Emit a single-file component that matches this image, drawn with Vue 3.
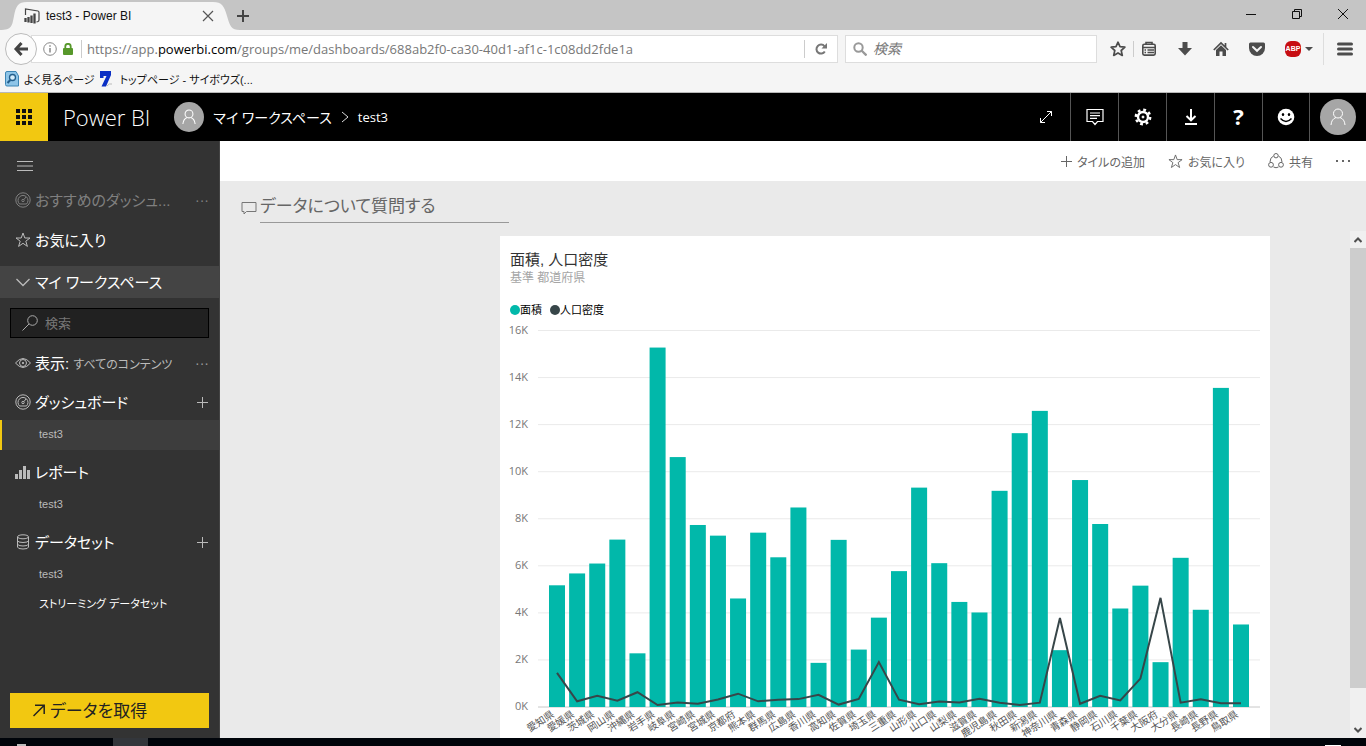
<script setup>
import { ref } from 'vue'

const prefectures = [
  ['愛知県', 5172, 1447], ['愛媛県', 5676, 244], ['茨城県', 6097, 478], ['岡山県', 7114, 270],
  ['沖縄県', 2281, 628], ['岩手県', 15275, 84], ['岐阜県', 10621, 191], ['宮崎県', 7735, 143],
  ['宮城県', 7282, 320], ['京都府', 4612, 566], ['熊本県', 7409, 241], ['群馬県', 6362, 310],
  ['広島県', 8479, 335], ['香川県', 1876, 520], ['高知県', 7103, 103], ['佐賀県', 2440, 341],
  ['埼玉県', 3797, 1913], ['三重県', 5774, 314], ['山形県', 9323, 121], ['山口県', 6112, 230],
  ['山梨県', 4465, 187], ['滋賀県', 4017, 351], ['鹿児島県', 9187, 179], ['秋田県', 11637, 88],
  ['新潟県', 12584, 183], ['神奈川県', 2415, 3778], ['青森県', 9645, 136], ['静岡県', 7777, 476],
  ['石川県', 4186, 276], ['千葉県', 5157, 1207], ['大阪府', 1905, 4640], ['大分県', 6340, 184],
  ['長崎県', 4132, 333], ['長野県', 13561, 155], ['鳥取県', 3507, 163]
]

const baseline = 387
const topLine = 10.5
const scale = (baseline - topLine) / 16000
const first = 47
const step = 684 / 34

const bars = prefectures.map(([name, area, density], i) => ({
  name,
  x: first + i * step,
  top: baseline - area * scale,
  lineY: baseline - density * scale
}))
const linePoints = bars.map((b) => `${b.x},${b.lineY}`).join(' ')
const ticks = [0, 2, 4, 6, 8, 10, 12, 14, 16].map((k) => ({
  label: `${k}K`,
  y: baseline - k * 1000 * scale
}))

const address = ref('')
const search = ref('')
const filter = ref('')
const question = ref('')
</script>

<template>
  <div class="window">
    <header class="browser">
      <div class="titlebar">
        <div class="tab">
          <svg class="tab-shape" viewBox="0 0 240 30" width="240" height="30" aria-hidden="true">
            <path d="M0 30C12 30 12 26 14 16C16 6 18 2 27 2H213C222 2 224 6 227 16C230 26 231 30 240 30Z" fill="#f5f5f5" />
          </svg>
          <svg class="tab-icon" viewBox="0 0 16 16" width="16" height="16" fill="none" stroke="#444">
            <path d="M1.500 7V1L14 3q1 .2 1 1.500V12q0 1-1 1.500L12.500 14" stroke-width="1.200" />
            <path d="M1.500 10v4M4.500 9v5.500M7.500 7.500V15M10.500 5.500v10" stroke-width="2.300" />
          </svg>
          <span class="tab-title">test3 - Power BI</span>
          <button class="plain tab-close" aria-label="タブを閉じる">
            <svg viewBox="0 0 12 12" width="12" height="12" stroke="#555" stroke-width="1.200"><path d="M1 1l10 10M11 1L1 11" /></svg>
          </button>
        </div>
        <button class="plain new-tab" aria-label="新しいタブ">
          <svg viewBox="0 0 12 12" width="12" height="12" stroke="#444" stroke-width="2"><path d="M6 0v12M0 6h12" /></svg>
        </button>
        <div class="window-controls">
          <button class="plain" aria-label="最小化"><svg viewBox="0 0 12 12" width="12" height="12" stroke="#111"><path d="M1 6.500h10" /></svg></button>
          <button class="plain" aria-label="元に戻す"><svg viewBox="0 0 12 12" width="12" height="12" stroke="#111" fill="none"><path d="M1.500 3.500h7v7h-7zM3.500 3.500v-2h7v7h-2" /></svg></button>
          <button class="plain" aria-label="閉じる"><svg viewBox="0 0 12 12" width="12" height="12" stroke="#111"><path d="M1 1l10 10M11 1L1 11" /></svg></button>
        </div>
      </div>

      <div class="navbar">
        <button class="plain back" aria-label="戻る">
          <svg viewBox="0 0 16 16" width="16" height="16" stroke="#444" stroke-width="3" fill="none"><path d="M8.500 2L3 8l5.500 6M3 8h12" /></svg>
        </button>
        <div class="url">
          <svg viewBox="0 0 14 14" width="14" height="14" fill="none" stroke="#888"><circle cx="7" cy="7" r="6.300" /><path d="M7 6v4.500M7 3.300v1.500" stroke-width="1.500" /></svg>
          <svg class="lock" viewBox="0 0 10 12" width="10" height="12"><path d="M2.300 6V3.500a2.700 2.700 0 0 1 5.400 0V6" fill="none" stroke="#57982b" stroke-width="1.800" /><rect y="5" width="10" height="7" rx="1" fill="#57982b" /></svg>
          <label class="address">
            <span class="address-text">https://app.<b>powerbi.com</b>/groups/me/dashboards/688ab2f0-ca30-40d1-af1c-1c08dd2fde1a</span>
            <input v-model="address" aria-label="アドレス" />
          </label>
          <button class="plain reload" aria-label="再読み込み">
            <svg viewBox="0 0 12 12" width="12" height="12"><path d="M9.500 3.300A4.500 4.500 0 1 0 9.800 8.500" fill="none" stroke="#777" stroke-width="2" /><path d="M12 0v5.500H6.500z" fill="#777" /></svg>
          </button>
        </div>
        <label class="web-search">
          <svg viewBox="0 0 14 14" width="14" height="14" fill="none" stroke="#999"><circle cx="5.500" cy="5.500" r="4.200" stroke-width="2" /><path d="M8.500 8.500l5 5" stroke-width="2.300" /></svg>
          <input v-model="search" placeholder="検索" aria-label="ウェブ検索" />
        </label>
        <div class="tools">
          <button class="plain star" aria-label="ブックマーク"><svg viewBox="0 0 16 16" width="16" height="16" fill="none" stroke="#4c4c4c" stroke-width="1.700" stroke-linejoin="round"><path d="M8 1.200l2 4.500 4.900.5-3.700 3.300 1.100 4.900L8 11.900l-4.300 2.500 1.100-4.900L1.100 6.200 6 5.700z" /></svg></button>
          <button class="plain list" aria-label="ブックマーク一覧"><svg viewBox="0 0 16 16" width="16" height="16" fill="none" stroke="#4c4c4c" stroke-width="1.600"><rect x="1.800" y="3.300" width="12.400" height="10.800" rx="1.500" /><path d="M2 6.500h12M3.500 9h1.500M6.500 9h6.500M3.500 11.500h1.500M6.500 11.500h6.500M5 3V1.500h6V3" /></svg></button>
          <button class="plain" aria-label="ダウンロード"><svg viewBox="0 0 16 16" width="16" height="16" fill="#4c4c4c"><path d="M5.500 1h5v6H15l-7 7.500L1 7h4.500z" /></svg></button>
          <button class="plain" aria-label="ホーム"><svg viewBox="0 0 16 16" width="16" height="16"><path d="M.8 9L8 2l7.200 7M12.500 2v4" fill="none" stroke="#4c4c4c" stroke-width="1.700" /><path d="M3 9l5-4.800L13 9v6H9.500v-4.500h-3V15H3z" fill="#4c4c4c" /></svg></button>
          <button class="plain" aria-label="Pocket"><svg viewBox="0 0 16 16" width="16" height="16"><path d="M1.500 1.500h13q1.500 0 1.500 1.500v4a8 8 0 0 1-16 0V3q0-1.500 1.500-1.500z" fill="#4c4c4c" /><path d="M4 6l4 3.800L12 6" fill="none" stroke="#f5f5f5" stroke-width="2" stroke-linecap="round" /></svg></button>
          <button class="plain abp" aria-label="Adblock Plus">
            <span class="abp-sign">ABP</span>
            <svg viewBox="0 0 8 4" width="8" height="4"><path d="M0 0h8L4 4z" fill="#4c4c4c" /></svg>
          </button>
          <button class="plain menu" aria-label="メニュー"><svg viewBox="0 0 16 14" width="16" height="14" stroke="#4c4c4c" stroke-width="3" stroke-linecap="round"><path d="M1.500 2h13M1.500 7h13M1.500 12h13" /></svg></button>
        </div>
      </div>

      <nav class="bookmarks">
        <a href="#">
          <svg viewBox="0 0 14 16" width="14" height="16"><path d="M.5 2q0-1.500 1.500-1.500h9L13.500 5v10H2Q.5 15 .5 13.500z" fill="#8ec5e8" stroke="#3d86b5" /><circle cx="7.500" cy="6.500" r="3" fill="#d6eefb" stroke="#245f8c" stroke-width="1.300" /><path d="M5.300 9L2.500 12" stroke="#245f8c" stroke-width="2" /></svg>
          <span>よく見るページ</span>
        </a>
        <a href="#">
          <svg viewBox="0 0 14 16" width="14" height="16"><path d="M1 0h11v4L7 15.500H2.500L7.500 5H4.500v2H1z" fill="#0a2fc4" /><path d="M8 15q2-3 5-2" stroke="#bbb" fill="none" /></svg>
          <span class="site">トップページ - サイボウズ(...</span>
        </a>
      </nav>
    </header>

    <header class="topbar">
      <button class="plain waffle" aria-label="アプリ">
        <svg viewBox="0 0 16 16" width="16" height="16" fill="#111"><path d="M0 0h4v4H0zM6 0h4v4H6zM12 0h4v4h-4zM0 6h4v4H0zM6 6h4v4H6zM12 6h4v4h-4zM0 12h4v4H0zM6 12h4v4H6zM12 12h4v4h-4z" /></svg>
      </button>
      <a href="#" class="brand">Power BI</a>
      <span class="avatar small"><svg viewBox="0 0 16 18" width="14" height="16" fill="none" stroke="#fff" stroke-width="1.200"><circle cx="8" cy="5.500" r="4.500" /><path d="M1 17q.5-6 5-7.500M15 17q-.5-6-5-7.500" /></svg></span>
      <a href="#" class="crumb">マイ ワークスペース</a>
      <svg class="crumb-arrow" viewBox="0 0 8 12" width="8" height="12" fill="none" stroke="#ddd"><path d="M1 1l6 5-6 5" /></svg>
      <a href="#" class="crumb page">test3</a>
      <div class="top-actions">
        <button class="plain" aria-label="全画面"><svg viewBox="0 0 14 14" width="14" height="14" fill="none" stroke="#fff"><path d="M1.500 12.500l11-11M8 1.500h4.500V6M1.500 8v4.500H6" /></svg></button>
        <button class="plain" aria-label="コメント"><svg viewBox="0 0 18 18" width="18" height="18" fill="none" stroke="#fff" stroke-width="1.200"><path d="M1 1.500h16v12h-5.500L9 16.500l-2.500-3H1zM4 5h10M4 7.700h10M4 10.400h7" /></svg></button>
        <button class="plain" aria-label="設定"><svg viewBox="0 0 18 18" width="18" height="18" fill="none" stroke="#fff"><circle cx="9" cy="9" r="5" stroke-width="2.400" /><circle cx="9" cy="9" r="7.200" stroke-width="2.400" stroke-dasharray="2.830 2.825" /><circle cx="9" cy="9" r="1" fill="#fff" /></svg></button>
        <button class="plain" aria-label="ダウンロード"><svg viewBox="0 0 14 18" width="14" height="18" fill="none" stroke="#fff" stroke-width="2"><path d="M7 1v11M2.500 8L7 12.300 11.500 8M1 16h12" /></svg></button>
        <button class="plain help" aria-label="ヘルプ">?</button>
        <button class="plain smile" aria-label="フィードバック"><svg viewBox="0 0 18 18" width="18" height="18"><circle cx="9" cy="9" r="8.300" fill="#fff" /><ellipse cx="6" cy="6.500" rx="1.200" ry="1.500" /><ellipse cx="12" cy="6.500" rx="1.200" ry="1.500" /><path d="M3.500 10.500q5.500 6 11 0" fill="none" stroke="#000" stroke-width="1.500" /></svg></button>
        <button class="plain account" aria-label="アカウント"><span class="avatar"><svg viewBox="0 0 16 18" width="16" height="18" fill="none" stroke="#fff"><circle cx="8" cy="5.500" r="4.500" /><path d="M1 17q.5-6 5-7.500M15 17q-.5-6-5-7.500" /></svg></span></button>
      </div>
    </header>

    <div class="workspace">
      <nav class="sidebar">
        <button class="plain burger" aria-label="ナビゲーション"><svg viewBox="0 0 16 10" width="16" height="10" stroke="#bbb"><path d="M0 .5h16M0 5h16M0 9.500h16" /></svg></button>
        <a href="#" class="row muted">
          <svg viewBox="0 0 16 16" width="16" height="16" fill="none" stroke="currentColor"><circle cx="8" cy="8" r="7.200" /><path d="M4.500 12a5 5 0 1 1 7 0z" /><circle cx="8" cy="8.500" r="1.200" /><path d="M9 7.500l2-2.500" /></svg>
          <span>おすすめのダッシュ...</span><i class="more">···</i>
        </a>
        <a href="#" class="row">
          <svg viewBox="0 0 16 16" width="16" height="16" fill="none" stroke="#bbb"><path d="M8 1l1.800 5h5.200l-4.200 3.200 1.600 5.200L8 11.300l-4.400 3.100 1.600-5.200L1 6h5.200z" /></svg>
          <span>お気に入り</span>
        </a>
        <a href="#" class="row current">
          <svg viewBox="0 0 16 16" width="16" height="16" fill="none" stroke="#bbb" stroke-width="1.300"><path d="M1.500 5L8 11.500 14.500 5" /></svg>
          <span>マイ ワークスペース</span>
        </a>
        <label class="filter">
          <svg viewBox="0 0 16 16" width="16" height="16" fill="none" stroke="#aaa"><circle cx="10.500" cy="5.500" r="4.800" /><path d="M7 9L.5 15.500" /></svg>
          <input v-model="filter" placeholder="検索" aria-label="検索" />
        </label>
        <a href="#" class="row view">
          <svg viewBox="0 0 16 16" width="16" height="16" fill="none" stroke="#bbb"><path d="M.5 8Q8-1 15.500 8 8 17 .5 8z" /><circle cx="8" cy="8" r="3.500" /><circle cx="8" cy="8" r=".7" fill="#bbb" /></svg>
          <span>表示: <small>すべてのコンテンツ</small></span><i class="more">···</i>
        </a>
        <div class="row head">
          <svg viewBox="0 0 16 16" width="16" height="16" fill="none" stroke="#bbb"><circle cx="8" cy="8" r="7.200" /><path d="M4.500 12a5 5 0 1 1 7 0z" /><circle cx="8" cy="8.500" r="1.200" /><path d="M9 7.500l2-2.500" /></svg>
          <span>ダッシュボード</span>
          <button class="plain add" aria-label="ダッシュボードを追加"><svg viewBox="0 0 11 11" width="11" height="11" stroke="#bbb"><path d="M5.500 0v11M0 5.500h11" /></svg></button>
        </div>
        <a href="#" class="child selected">test3</a>
        <div class="row head">
          <svg viewBox="0 0 16 16" width="16" height="16" fill="#bbb"><path d="M0 10h3v5H0zM4 6h3v9H4zM8 2h3v13H8zM12 6h3v9h-3z" /></svg>
          <span>レポート</span>
        </div>
        <a href="#" class="child">test3</a>
        <div class="row head">
          <svg viewBox="0 0 16 16" width="16" height="16" fill="none" stroke="#bbb"><ellipse cx="8" cy="2.800" rx="5.500" ry="2" /><path d="M2.500 3v10q0 2 5.500 2t5.500-2V3M2.500 6.500q0 2 5.500 2t5.500-2M2.500 10q0 2 5.500 2t5.500-2" /></svg>
          <span>データセット</span>
          <button class="plain add" aria-label="データセットを追加"><svg viewBox="0 0 11 11" width="11" height="11" stroke="#bbb"><path d="M5.500 0v11M0 5.500h11" /></svg></button>
        </div>
        <a href="#" class="child">test3</a>
        <a href="#" class="child bright">ストリーミング データセット</a>
        <button class="get-data">
          <svg viewBox="0 0 12 13" width="12" height="13" fill="none" stroke="#222" stroke-width="1.500"><path d="M.5 12L11 1.500M2 1.200h9.200V10" /></svg>
          <span>データを取得</span>
        </button>
      </nav>

      <main class="content">
        <div class="actions">
          <button class="plain"><svg viewBox="0 0 11 11" width="11" height="11" stroke="#666"><path d="M5.500 0v11M0 5.500h11" /></svg><span>タイルの追加</span></button>
          <button class="plain"><svg viewBox="0 0 16 16" width="15" height="15" fill="none" stroke="#666"><path d="M8 1l1.800 5h5.200l-4.200 3.200 1.600 5.200L8 11.300l-4.400 3.100 1.600-5.200L1 6h5.200z" /></svg><span>お気に入り</span></button>
          <button class="plain"><svg viewBox="0 0 16 16" width="16" height="16" fill="none" stroke="#666"><path d="M5.500 3Q2 4.500 2 9M10.500 3Q14 4.500 14 9M5.500 14q2.500 1.500 5 0" /><circle cx="8" cy="2.700" r="2.200" /><circle cx="3" cy="11.800" r="2.400" /><circle cx="13" cy="11.800" r="2.400" /></svg><span>共有</span></button>
          <button class="plain dots" aria-label="その他"><svg viewBox="0 0 14 2" width="14" height="2" fill="#666"><path d="M0 0h2v2H0zM6 0h2v2H6zM12 0h2v2h-2z" /></svg></button>
        </div>

        <label class="question">
          <svg viewBox="0 0 16 14" width="16" height="14" fill="none" stroke="#777"><path d="M1 1.500h14v9H5.500L3 13v-2.500H1z" /></svg>
          <input v-model="question" placeholder="データについて質問する" aria-label="データについて質問する" />
        </label>

        <div class="scroll-area">
          <div class="canvas">
            <article class="tile">
              <h2>面積, 人口密度</h2>
              <p>基準 都道府県</p>
              <div class="legend">
                <span><i class="dot area"></i>面積</span>
                <span><i class="dot density"></i>人口密度</span>
              </div>
              <svg class="chart" viewBox="0 0 750 424" role="img" aria-label="都道府県別の面積と人口密度">
                <g v-for="t in ticks" :key="t.label">
                  <line x1="28" x2="750" :y1="t.y" :y2="t.y" :class="['grid', { axis: t.label === '0K' }]" />
                  <text x="18" :y="t.y + 3" class="tick">{{ t.label }}</text>
                </g>
                <rect v-for="b in bars" :key="b.name" :x="b.x - 8" :y="b.top" width="16" :height="baseline - b.top" class="bar" />
                <polyline :points="linePoints" class="line" />
                <text v-for="b in bars" :key="b.name" class="name" :transform="`translate(${b.x - 2} ${baseline + 9}) rotate(-33)`">{{ b.name }}</text>
              </svg>
            </article>
          </div>
          <div class="scrollbar" aria-hidden="true">
            <span class="arrow"><svg viewBox="0 0 8 6" width="8" height="6" fill="none" stroke="#505050" stroke-width="2"><path d="M.5 5L4 1.500 7.500 5" /></svg></span>
            <span class="thumb"></span>
            <span class="track"></span>
            <span class="arrow"><svg viewBox="0 0 8 6" width="8" height="6" fill="none" stroke="#505050" stroke-width="2"><path d="M.5 1L4 4.500 7.500 1" /></svg></span>
          </div>
        </div>
      </main>
    </div>

    <footer class="taskbar"><span class="start"></span><span class="app"></span><span class="tray"></span></footer>
  </div>
</template>

<style>
body {
  margin: 0;
}
</style>

<style scoped>
.window {
  display: flex;
  flex-direction: column;
  height: 100vh;
  overflow: hidden;
  font-family: "Liberation Sans", "Noto Sans CJK JP", sans-serif;
  font-feature-settings: "palt";
  font-size: 12px;
  color: #111;
}
.window * {
  box-sizing: border-box;
}
svg {
  flex: none;
  display: block;
}
a {
  color: inherit;
  text-decoration: none;
}
i {
  font-style: normal;
}
input {
  font: inherit;
  font-feature-settings: inherit;
  color: inherit;
  border: 0;
  background: none;
  padding: 0;
  min-width: 0;
  outline: none;
}
.plain {
  font: inherit;
  font-feature-settings: inherit;
  color: inherit;
  border: 0;
  background: none;
  padding: 0;
  display: flex;
  align-items: center;
  justify-content: center;
}

.browser {
  flex: none;
  background: #f5f5f5;
  border-bottom: 1px solid #b8b8b8;
}
.titlebar {
  display: flex;
  height: 30px;
  background: #c5c5c5;
}
.tab {
  position: relative;
  display: flex;
  align-items: center;
  width: 230px;
  padding: 2px 16px 0 24px;
}
.tab-shape {
  position: absolute;
  left: 0;
  top: 0;
}
.tab-icon,
.tab-title,
.tab-close {
  position: relative;
}
.tab-title {
  flex: 1;
  margin-left: 6px;
}
.new-tab {
  width: 26px;
  padding-top: 2px;
}
.window-controls {
  display: flex;
  margin-left: auto;
}
.window-controls .plain {
  width: 46px;
  height: 28px;
}
.navbar {
  display: flex;
  align-items: center;
  height: 36px;
  padding-top: 2px;
}
.back {
  position: relative;
  flex: none;
  width: 32px;
  height: 32px;
  margin-left: 5px;
  border: 1px solid #bbb;
  border-radius: 50%;
  background: #fbfbfb;
}
.url {
  flex: 1;
  display: flex;
  align-items: center;
  height: 28px;
  margin-left: -6px;
  padding-left: 11px;
  background: #fff;
  border: 1px solid #ddd;
  min-width: 0;
}
.lock {
  margin: 0 8px 0 6px;
}
.address {
  flex: 1;
  display: flex;
  min-width: 0;
  padding-left: 5px;
  border-left: 1px solid #ccc;
  font-family: "Open Sans", sans-serif;
  font-size: 13px;
  line-height: 18px;
  color: #777;
}
.address-text {
  white-space: nowrap;
  overflow: hidden;
}
.address b {
  font-weight: 400;
  color: #000;
}
.address input {
  flex: 1;
}
.reload {
  width: 33px;
  height: 18px;
  border-left: 1px solid #ccc;
}
.web-search {
  flex: 0 1 252px;
  display: flex;
  align-items: center;
  gap: 6px;
  height: 28px;
  margin-left: 7px;
  padding-left: 7px;
  background: #fff;
  border: 1px solid #ddd;
  min-width: 0;
}
.web-search input {
  flex: 1;
  font-size: 14px;
}
.web-search input::placeholder {
  color: #777;
  font-style: italic;
}
.tools {
  display: flex;
  align-items: center;
  margin-left: 5px;
}
.tools .plain {
  width: 36px;
  height: 16px;
}
.tools .star {
  width: 32px;
  border-right: 1px solid #ccc;
}
.tools .list {
  width: 33px;
  padding-right: 3px;
}
.tools .abp {
  width: 49px;
  height: 32px;
  gap: 4px;
  border-right: 1px solid #ddd;
}
.abp-sign {
  width: 16px;
  height: 16px;
  border-radius: 6px;
  background: #c70d12;
  color: #fff;
  font-size: 7px;
  line-height: 16px;
  font-weight: 700;
  text-align: center;
}
.tools .menu {
  width: 42px;
}
.bookmarks {
  display: flex;
  align-items: center;
  gap: 4px;
  height: 26px;
  padding-left: 5px;
  font-size: 11px;
}
.bookmarks a {
  display: flex;
  align-items: center;
  gap: 5px;
}
.bookmarks .site {
  margin-left: 2px;
}

.topbar {
  flex: none;
  display: flex;
  align-items: center;
  height: 48px;
  background: #000;
  color: #fff;
}
.waffle {
  width: 48px;
  height: 48px;
  background: #f2c811;
}
.brand {
  margin: 0 24px 0 15px;
  font: 300 22px "Open Sans", sans-serif;
}
.avatar {
  display: flex;
  align-items: center;
  justify-content: center;
  width: 36px;
  height: 36px;
  border-radius: 50%;
  background: #a6a6a6;
}
.avatar.small {
  width: 30px;
  height: 30px;
  margin-right: 9px;
}
.crumb {
  font-family: "Open Sans", "Noto Sans CJK JP", sans-serif;
  font-size: 14px;
}
.crumb.page {
  font-size: 13px;
}
.crumb-arrow {
  margin: 0 9px;
}
.top-actions {
  display: flex;
  margin-left: auto;
}
.top-actions .plain {
  width: 48px;
  height: 48px;
  border-left: 1px solid #555;
}
.top-actions .plain:first-child {
  border-left: 0;
}
.top-actions .help {
  font: 700 22px "Open Sans", sans-serif;
  padding-bottom: 2px;
}
.top-actions .smile {
  width: 47px;
}
.top-actions .account {
  width: 57px;
}

.workspace {
  flex: 1;
  display: flex;
  min-height: 0;
}
.sidebar {
  flex: none;
  display: flex;
  flex-direction: column;
  width: 220px;
  padding: 11px 0 10px;
  background: #333;
  border-right: 1px solid #444;
  color: #fff;
}
.burger {
  width: 16px;
  height: 28px;
  margin-left: 17px;
}
.row {
  display: flex;
  align-items: center;
  gap: 4px;
  height: 40px;
  padding: 0 10px 0 15px;
  font-size: 15px;
  white-space: nowrap;
}
.row span {
  padding-bottom: 2px;
}
.row small {
  font-size: 12px;
  color: #bbb;
}
.row .more {
  margin-left: auto;
  font-size: 14px;
  color: #999;
}
.row.muted,
.row.muted .more {
  color: #808080;
}
.row.current {
  height: 32px;
  margin: 6px 0 10px;
  background: #444;
}
.filter {
  display: flex;
  align-items: center;
  gap: 7px;
  height: 30px;
  margin: 0 10px;
  padding-left: 11px;
  background: #212121;
  border: 1px solid #000;
}
.filter input {
  flex: 1;
  font-size: 13px;
}
.filter input::placeholder {
  color: #777;
}
.row.view {
  height: 42px;
  padding-top: 8px;
}
.row.head {
  padding-top: 4px;
}
.add {
  width: 11px;
  height: 16px;
  margin: 0 1px 0 auto;
}
.child {
  height: 30px;
  padding-left: 39px;
  font-size: 11px;
  line-height: 28px;
  color: #bbb;
}
.child.selected {
  padding-left: 37px;
  border-left: 2px solid #f2c811;
  background: #3d3d3d;
}
.child.bright {
  color: #fff;
}
.get-data {
  display: flex;
  align-items: center;
  gap: 5px;
  height: 35px;
  margin: auto 10px 0;
  padding: 0 0 0 23px;
  border: 0;
  background: #f2c811;
  color: #222;
  font: inherit;
  font-feature-settings: inherit;
  font-size: 17px;
}
.get-data span {
  padding-bottom: 2px;
}

.content {
  flex: 1;
  display: flex;
  flex-direction: column;
  min-width: 0;
  background: #eaeaea;
}
.actions {
  flex: none;
  display: flex;
  align-items: center;
  justify-content: flex-end;
  gap: 23px;
  height: 40px;
  padding-right: 16px;
  background: #fff;
  color: #666;
}
.actions .plain {
  gap: 5px;
}
.question {
  flex: none;
  display: flex;
  align-items: center;
  gap: 3px;
  height: 50px;
  padding-left: 21px;
}
.question svg {
  margin-top: 4px;
}
.question input {
  width: 249px;
  height: 34px;
  padding-top: 3px;
  border-bottom: 1px solid #999;
  font-size: 17px;
}
.question input::placeholder {
  color: #666;
}
.scroll-area {
  flex: 1;
  display: flex;
  min-height: 0;
}
.canvas {
  flex: 1;
  min-width: 0;
  overflow: hidden;
  padding: 5px 80px 0 280px;
}
.tile {
  padding: 14px 10px;
  background: #fff;
}
.tile h2 {
  margin: 0;
  font-size: 15px;
  line-height: 20px;
  font-weight: 400;
  color: #333;
}
.tile p {
  margin: 0;
  font-size: 12px;
  line-height: 16px;
  color: #a6a6a6;
}
.legend {
  display: flex;
  gap: 8px;
  margin-top: 16px;
  font-size: 11px;
  line-height: 16px;
  color: #000;
}
.legend span {
  display: flex;
  align-items: center;
}
.dot {
  width: 10px;
  height: 10px;
  border-radius: 50%;
}
.dot.area {
  background: #01b8aa;
}
.dot.density {
  background: #374649;
}
.chart {
  width: 100%;
  margin-top: 2px;
  overflow: visible;
}
.grid {
  stroke: #eaeaea;
}
.grid.axis {
  stroke: #c8c8c8;
}
.tick {
  font: 11px "Open Sans", sans-serif;
  fill: #777;
  text-anchor: end;
}
.bar {
  fill: #01b8aa;
}
.line {
  fill: none;
  stroke: #374649;
  stroke-width: 2px;
}
.name {
  font-size: 10px;
  fill: #555;
  text-anchor: end;
}

.scrollbar {
  flex: none;
  display: flex;
  flex-direction: column;
  width: 16px;
  background: #f0f0f0;
}
.arrow {
  display: flex;
  align-items: center;
  justify-content: center;
  height: 17px;
}
.thumb {
  flex: 440;
  background: #cdcdcd;
}
.track {
  flex: 33;
}

.taskbar {
  flex: none;
  display: flex;
  align-items: flex-end;
  height: 8px;
  background: #00040a;
}
.start {
  width: 9px;
  height: 2px;
  margin-left: 17px;
  background: #bbb;
}
.app {
  width: 35px;
  height: 8px;
  margin-left: 87px;
  background: #33363b;
}
.tray {
  width: 16px;
  height: 1px;
  margin: 0 25px 0 auto;
  background: #fff;
}
</style>
